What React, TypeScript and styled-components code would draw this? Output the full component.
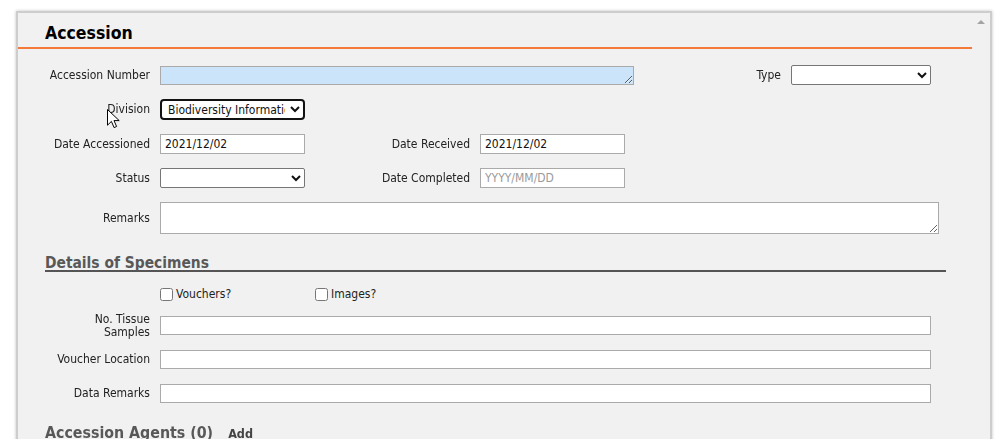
import React from "react";
import styled, { createGlobalStyle } from "styled-components";

const GlobalStyle = createGlobalStyle`
    html, body {
        margin: 0;
        padding: 0;
        background: #fff;
        overflow: hidden;
    }
    body {
        font-family: "DejaVu Sans Condensed", "DejaVu Sans", Verdana, sans-serif;
        font-size: 12px;
        color: #222;
    }
`;

export default function App() {
    return (
        <>
            <GlobalStyle />
            <Panel>
                <Content>
                    <Title>Accession</Title>
                    <Body>
                        <Fields>
                            <Row>
                                <Label $w={115}>Accession Number</Label>
                                <TextArea $w={474} $h={19} $tint rows={1} />
                                <Label $w={157}>Type</Label>
                                <Select $w={140} defaultValue="">
                                    <option value=""></option>
                                </Select>
                            </Row>
                            <Row>
                                <Label $w={115}>
                                    Division
                                    <Cursor width="13" height="20" viewBox="0 0 13 20">
                                        <path
                                            d="M0.5 0.5 L0.5 16.2 L4.4 12.4 L7.1 18.6 L9.6 17.5 L7 11.6 L12.2 11.6 Z"
                                            fill="#fff"
                                            stroke="#000"
                                            strokeWidth="1"
                                            strokeLinejoin="round"
                                        />
                                    </Cursor>
                                </Label>
                                <Select $w={145} $focused defaultValue="bio">
                                    <option value="bio">Biodiversity Informatics</option>
                                </Select>
                            </Row>
                            <Row>
                                <Label $w={115}>Date Accessioned</Label>
                                <Input $w={145} defaultValue="2021/12/02" />
                                <Label $w={175}>Date Received</Label>
                                <Input $w={145} defaultValue="2021/12/02" />
                            </Row>
                            <Row>
                                <Label $w={115}>Status</Label>
                                <Select $w={145} defaultValue="">
                                    <option value=""></option>
                                </Select>
                                <Label $w={175}>Date Completed</Label>
                                <Input $w={145} placeholder="YYYY/MM/DD" />
                            </Row>
                            <Row>
                                <Label $w={115}>Remarks</Label>
                                <TextArea $w={779} $h={32} />
                            </Row>
                        </Fields>

                        <SectionHeading>Details of Specimens</SectionHeading>

                        <SpecimenFields>
                            <CheckRow>
                                <Check $w={155}>
                                    <input type="checkbox" />
                                    Vouchers?
                                </Check>
                                <Check>
                                    <input type="checkbox" />
                                    Images?
                                </Check>
                            </CheckRow>
                            <Row $h={19}>
                                <Label $w={115}>
                                    No. Tissue
                                    <br />
                                    Samples
                                </Label>
                                <Input $w={771} $h={19} />
                            </Row>
                            <Row $h={19}>
                                <Label $w={115}>Voucher Location</Label>
                                <Input $w={771} $h={19} />
                            </Row>
                            <Row $h={19}>
                                <Label $w={115}>Data Remarks</Label>
                                <Input $w={771} $h={19} />
                            </Row>
                        </SpecimenFields>

                        <AgentsHeading>
                            Accession Agents (0)
                            <AddLink href="#">Add</AddLink>
                        </AgentsHeading>
                    </Body>
                </Content>
                <ScrollTrack>
                    <UpArrow />
                </ScrollTrack>
            </Panel>
        </>
    );
}

const Panel = styled.div`
    display: flex;
    margin: 11px 16px 0;
    height: 440px;
    background: #f0f1f0;
    border: 2px solid #cdcdcd;
    border-bottom: none;
    box-shadow: 0 0 3px rgba(0, 0, 0, 0.25);
    overflow: hidden;
`;

const Content = styled.div`
    flex: 1;
    min-width: 0;
`;

const ScrollTrack = styled.div`
    width: 18px;
    display: flex;
    justify-content: center;
    padding-top: 7px;
`;

const UpArrow = styled.div`
    width: 0;
    height: 0;
    border-left: 4px solid transparent;
    border-right: 4px solid transparent;
    border-bottom: 4px solid #a3a3a3;
`;

const Title = styled.h2`
    margin: 0;
    padding: 10px 0 3px 27px;
    font-size: 17.5px;
    line-height: 21px;
    font-weight: bold;
    color: #000;
    border-bottom: 2px solid #f47a3c;
`;

const Body = styled.div`
    padding: 16px 0 0 27px;
`;

const Fields = styled.div`
    display: flex;
    flex-direction: column;
    gap: 14px;
`;

const SpecimenFields = styled.div`
    display: flex;
    flex-direction: column;
    gap: 15px;
    margin-top: 15px;
`;

const Row = styled.div<{ $h?: number }>`
    display: flex;
    align-items: center;
    min-height: 19px;
    height: ${(p) => (p.$h ? `${p.$h}px` : "auto")};
`;

const Label = styled.label<{ $w: number }>`
    position: relative;
    width: ${(p) => p.$w}px;
    box-sizing: border-box;
    padding-right: 10px;
    text-align: right;
    line-height: 13px;
    color: #222;
    flex-shrink: 0;
`;

const Cursor = styled.svg`
    position: absolute;
    left: 62px;
    top: 6px;
`;

const Input = styled.input<{ $w: number; $h?: number }>`
    box-sizing: border-box;
    width: ${(p) => p.$w}px;
    height: ${(p) => p.$h ?? 20}px;
    margin: 0;
    padding: 0 4px;
    border: 1px solid #aaa;
    background: #fff;
    font-family: inherit;
    font-size: 12px;
    color: #111;
    outline: none;

    &::placeholder {
        color: #9a9a9a;
    }
`;

const TextArea = styled.textarea<{ $w: number; $h: number; $tint?: boolean }>`
    box-sizing: border-box;
    width: ${(p) => p.$w}px;
    height: ${(p) => p.$h}px;
    margin: 0;
    padding: 2px 4px;
    border: 1px solid #aaa;
    background: ${(p) => (p.$tint ? "#cbe4fa" : "#fff")};
    font-family: inherit;
    font-size: 12px;
    outline: none;
    resize: both;
`;

const Select = styled.select<{ $w: number; $focused?: boolean }>`
    box-sizing: border-box;
    width: ${(p) => p.$w}px;
    height: ${(p) => (p.$focused ? 21 : 20)}px;
    margin: 0;
    padding: 0 2px;
    font-family: inherit;
    font-size: 12px;
    color: #111;
    background: #fff;
    border: ${(p) => (p.$focused ? "2px solid #111" : "1px solid #767676")};
    border-radius: ${(p) => (p.$focused ? 4 : 2)}px;
    outline: none;
`;

const SectionHeading = styled.h3`
    width: 901px;
    margin: 23px 0 0;
    font-size: 15.4px;
    line-height: 13px;
    font-weight: bold;
    color: #585858;
    border-bottom: 2px solid #555;
`;

const CheckRow = styled.div`
    display: flex;
    align-items: center;
    height: 14px;
    padding-left: 115px;
`;

const Check = styled.label<{ $w?: number }>`
    display: flex;
    align-items: center;
    width: ${(p) => (p.$w ? `${p.$w}px` : "auto")};
    color: #222;

    input {
        width: 13px;
        height: 13px;
        margin: 0 3px 0 0;
    }
`;

const AgentsHeading = styled.h3`
    margin: 21px 0 0;
    font-size: 15.8px;
    line-height: 18px;
    font-weight: bold;
    color: #585858;
`;

const AddLink = styled.a`
    margin-left: 15px;
    font-size: 12.5px;
    font-weight: bold;
    color: #444;
    text-decoration: none;
`;
